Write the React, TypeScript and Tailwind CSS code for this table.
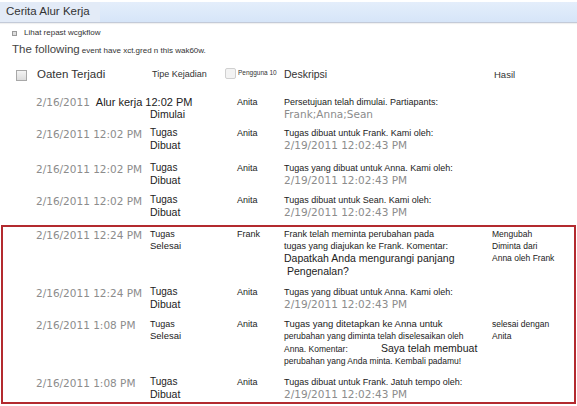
import React from 'react';

const DATE = "font-['DejaVu_Sans',sans-serif] text-[10.5px] text-[#8c8c8c] whitespace-nowrap";

type RowProps = {
  h: string;
  lead: string;
  date: React.ReactNode;
  type: React.ReactNode;
  user: string;
  desc: React.ReactNode;
  result?: React.ReactNode;
};

const Row = ({ h, lead, date, type, user, desc, result }: RowProps) => (
  <div className={`flex items-start leading-[12px] ${h}`}>
    <div className={`shrink-0 ${lead}`} />
    <div className="w-[114px] shrink-0">{date}</div>
    <div className="w-[87px] shrink-0 text-[#222]">{type}</div>
    <div className="w-[47px] shrink-0 text-[9px] text-[#222]">{user}</div>
    <div className="w-[208px] shrink-0 text-[9px] text-[#222] whitespace-nowrap">{desc}</div>
    <div className="flex-1 text-[8.5px] text-[#222]">{result}</div>
  </div>
);

const Type = ({ a, b, small }: { a: string; b: string; small?: boolean }) => (
  <>
    <div className={small ? 'text-[9px]' : 'text-[10px]'}>{a}</div>
    <div className={small ? 'text-[9.5px]' : 'text-[10.5px]'}>{b}</div>
  </>
);

const Created = ({ who, label = 'Kami oleh:', yang }: { who: string; label?: string; yang?: boolean }) => (
  <>
    <div>Tugas {yang ? 'yang dibuat' : 'dibuat'} untuk {who}. {label}</div>
    <div className={DATE}>2/19/2011 12:02:43 PM</div>
  </>
);

export default function App() {
  return (
    <div className="w-[577px] h-[406px] bg-white overflow-hidden font-['Liberation_Sans',Arial,sans-serif] pt-[2px]">
      {/* Title bar */}
      <div className="h-[21px] bg-gradient-to-b from-[#e4eefb] to-[#d6e5f8] border-b border-[#c3cad8] flex items-center shadow-[0_1px_1px_rgba(0,0,0,0.06)]">
        <div className="h-full w-[100px] bg-[#e3ebf7] flex items-center pl-[6px] text-[11.5px] text-[#333]">
          Cerita Alur Kerja
        </div>
      </div>

      <div className="mt-[4px] h-[12px] flex items-center pl-[12px] text-[8px] text-[#333]">
        <span className="w-[5px] h-[5px] border border-[#999] bg-[#ddd] mr-[7px]" />
        Lihat repast wcgkflow
      </div>
      <div className="mt-[2px] h-[14px] flex items-baseline pl-[12px] text-[#444]">
        <span className="text-[11.5px]">The following</span>
        <span className="text-[8px] ml-[2px] text-[#333]">event have xct.gred n this wak60w.</span>
      </div>

      {/* Column headers */}
      <div className="mt-[13px] h-[14px] flex items-center text-[#333]">
        <div className="w-[16px]" />
        <div className="w-[11px] h-[11px] border border-[#a8a8a8] bg-gradient-to-b from-[#f4f4f4] to-[#dcdcdc]" />
        <div className="w-[10px]" />
        <div className="w-[115px] text-[11.5px]">Oaten Terjadi</div>
        <div className="w-[73px] text-[9px]">Tipe Kejadian</div>
        <div className="w-[11px] h-[11px] -mt-[4px] rounded-[2px] border border-[#d0d0d0] bg-[#f3f3f3]" />
        <div className="w-[48px] text-[6.5px] pl-[2px] -mt-[4px]">Pengguna 10</div>
        <div className="w-[210px] text-[10.5px]">Deskripsi</div>
        <div className="text-[9.5px]">Hasil</div>
      </div>

      <div className="mt-[14px]">
        <Row
          h="h-[31px]"
          lead="w-[36px]"
          date={
            <div className="flex items-baseline">
              <span className={DATE}>2/16/2011</span>
              <span className="ml-[6px] text-[11px] text-[#222] whitespace-nowrap">Alur kerja 12:02 PM</span>
            </div>
          }
          type={
            <>
              <div className="h-[12px]" />
              <div className="text-[10.5px]">Dimulai</div>
            </>
          }
          user="Anita"
          desc={
            <>
              <div>Persetujuan telah dimulai. Partiapants:</div>
              <div className={DATE}>Frank;Anna;Sean</div>
            </>
          }
        />
        <Row h="h-[35px]" lead="w-[36px]" date={<span className={DATE}>2/16/2011 12:02 PM</span>} type={<Type a="Tugas" b="Dibuat" />} user="Anita" desc={<Created who="Frank" />} />
        <Row h="h-[32px]" lead="w-[36px]" date={<span className={DATE}>2/16/2011 12:02 PM</span>} type={<Type a="Tugas" b="Dibuat" />} user="Anita" desc={<Created who="Anna" yang />} />
        <Row h="h-[31px]" lead="w-[36px]" date={<span className={DATE}>2/16/2011 12:02 PM</span>} type={<Type a="Tugas" b="Dibuat" />} user="Anita" desc={<Created who="Sean" />} />

        {/* Highlighted block */}
        <div className="mx-[1px] border-2 border-[#b32a2f] pt-[1px] h-[179px]">
          <Row
            h="h-[58px]"
            lead="w-[33px]"
            date={<span className={DATE}>2/16/2011 12:24 PM</span>}
            type={<Type a="Tugas" b="Selesai" small />}
            user="Frank"
            desc={
              <>
                <div>Frank telah meminta perubahan pada</div>
                <div>tugas yang diajukan ke Frank. Komentar:</div>
                <div className="text-[10.5px] leading-[13px]">Dapatkah Anda mengurangi panjang</div>
                <div className="text-[10.5px] leading-[13px] pl-[3px]">Pengenalan?</div>
              </>
            }
            result={
              <>
                <div>Mengubah</div>
                <div>Diminta dari</div>
                <div>Anna oleh Frank</div>
              </>
            }
          />
          <Row h="h-[32px]" lead="w-[33px]" date={<span className={DATE}>2/16/2011 12:24 PM</span>} type={<Type a="Tugas" b="Dibuat" />} user="Anita" desc={<Created who="Anna" yang />} />
          <Row
            h="h-[58px]"
            lead="w-[33px]"
            date={<span className={DATE}>2/16/2011 1:08 PM</span>}
            type={<Type a="Tugas" b="Selesai" small />}
            user="Anita"
            desc={
              <>
                <div className="text-[9.5px]">Tugas yang ditetapkan ke Anna untuk</div>
                <div className="text-[8.5px]">perubahan yang diminta telah diselesaikan oleh</div>
                <div className="flex items-baseline">
                  <span className="text-[8.5px] w-[97px]">Anna. Komentar:</span>
                  <span className="text-[10.5px]">Saya telah membuat</span>
                </div>
                <div className="text-[8.5px]">perubahan yang Anda minta. Kembali padamu!</div>
              </>
            }
            result={
              <>
                <div>selesai dengan</div>
                <div>Anita</div>
              </>
            }
          />
          <Row h="h-[26px]" lead="w-[33px]" date={<span className={DATE}>2/16/2011 1:08 PM</span>} type={<Type a="Tugas" b="Dibuat" />} user="Anita" desc={<Created who="Frank" label="Jatuh tempo oleh:" />} />
        </div>
      </div>
    </div>
  );
}
